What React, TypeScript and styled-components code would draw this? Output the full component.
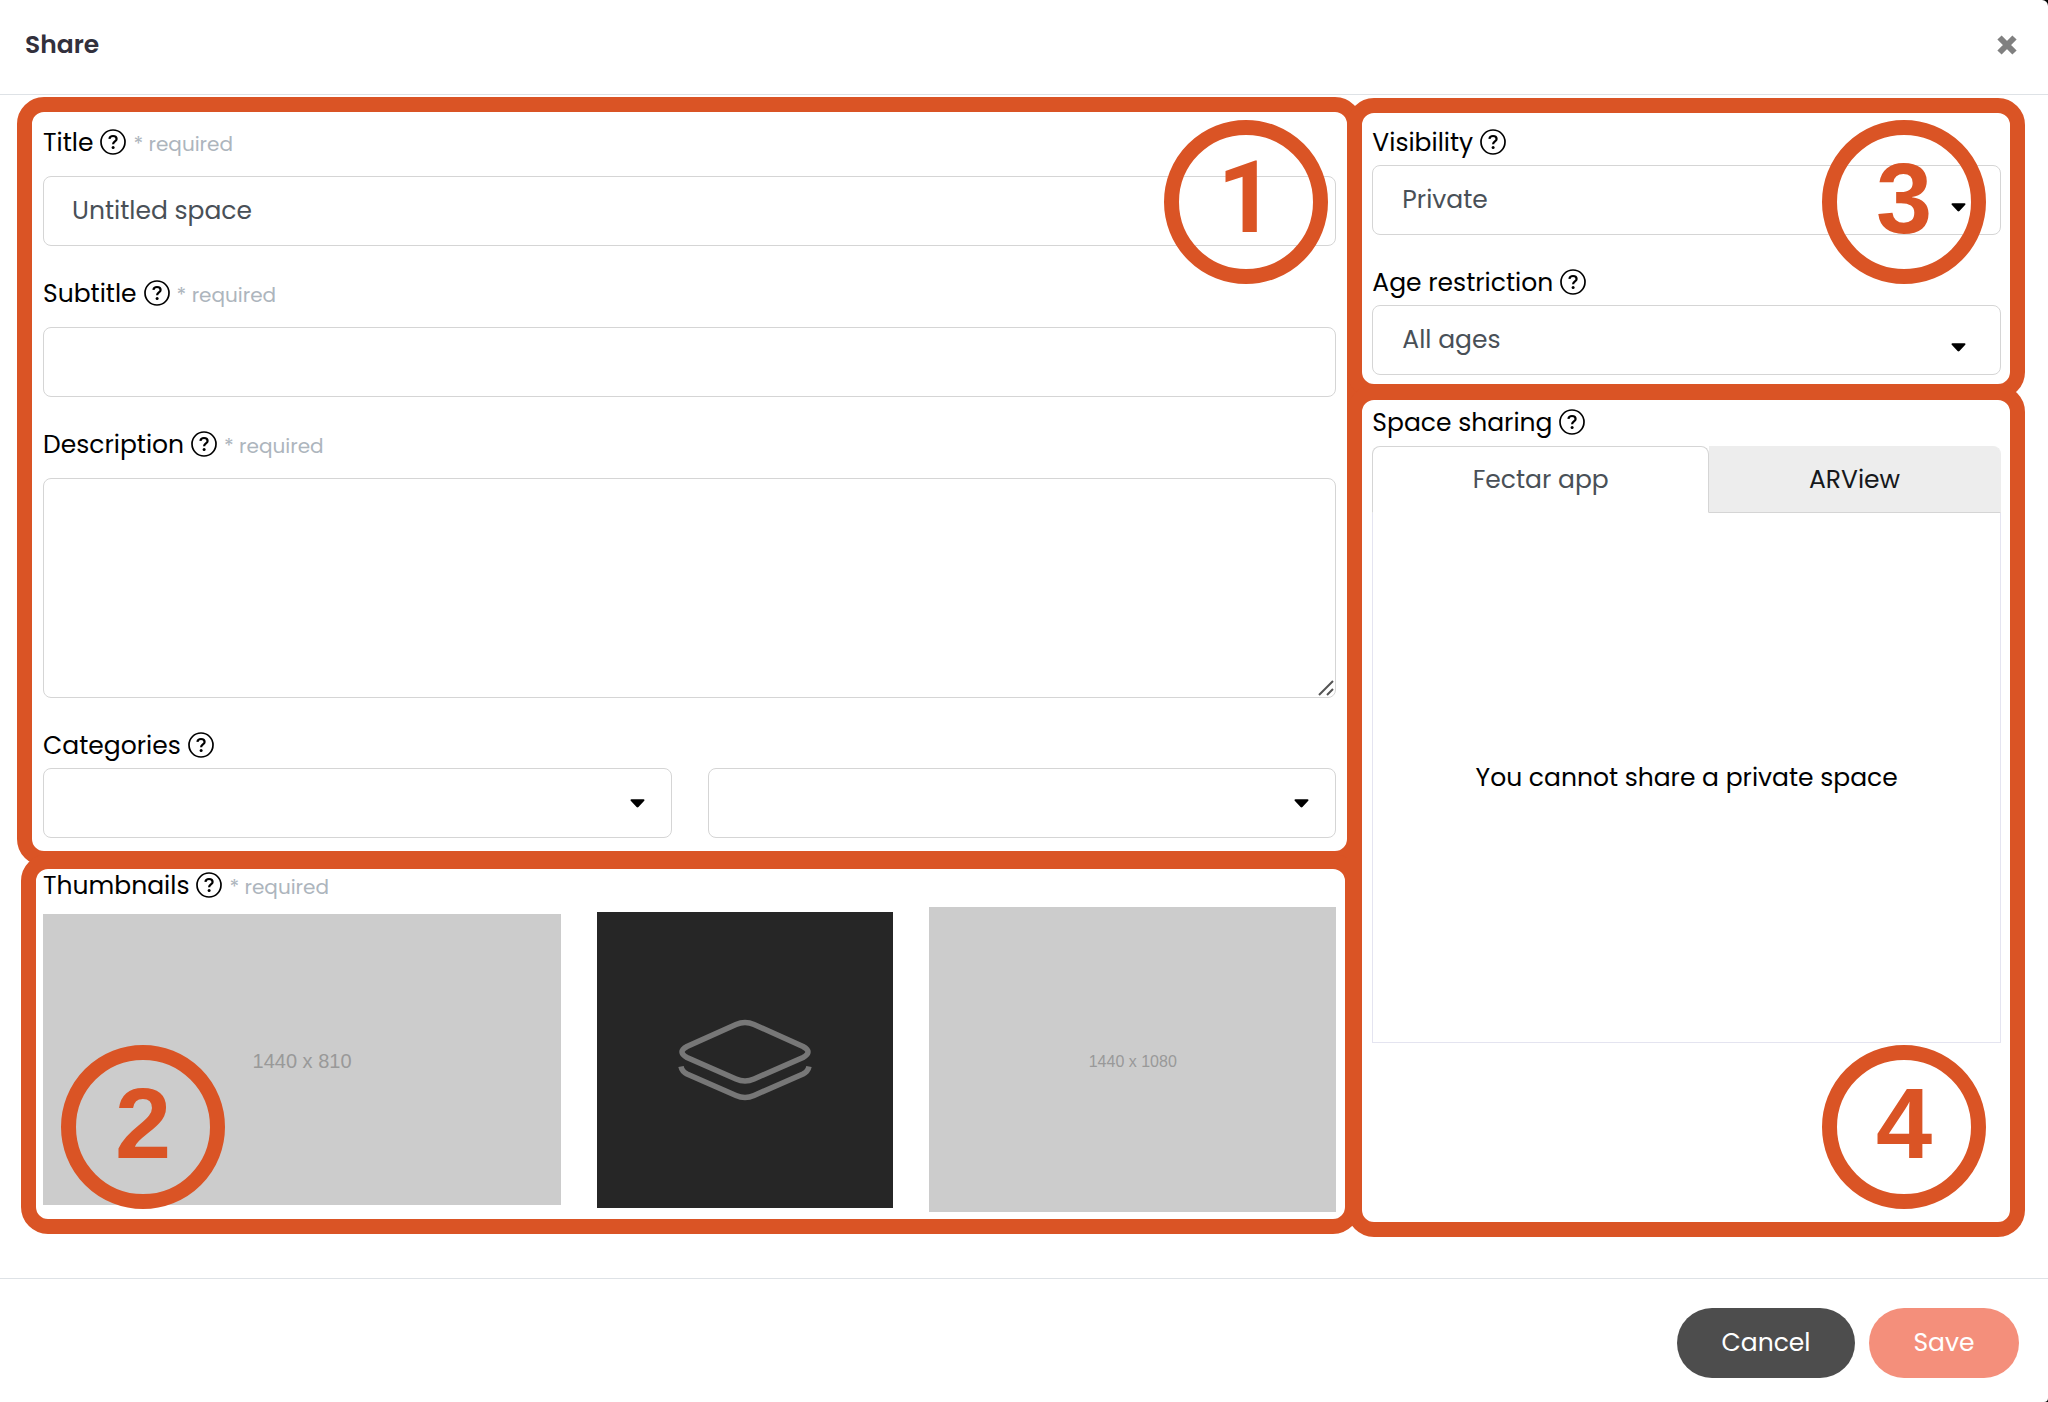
import React from "react";
import styled, { createGlobalStyle } from "styled-components";

const accent = "#da5425";
const uiFont = `Poppins, Inter, "Open Sans", sans-serif`;

const GlobalStyle = createGlobalStyle`
  *, *::before, *::after { box-sizing: border-box; }
  body { margin: 0; background: #000; font-family: ${uiFont}; font-size: 25px; color: #000; }
  button, input, select, textarea { font: inherit; }
`;

const Modal = styled.div`
  min-height: 100vh;
  display: flex;
  flex-direction: column;
  background: #fff;
  border-radius: 0 6px 4px 0;
`;

const Header = styled.header`
  display: flex;
  align-items: center;
  justify-content: space-between;
  height: 95px;
  padding: 0 28px 4px 25px;
  border-bottom: 1px solid #dee2e6;
`;

const Heading = styled.h1`
  margin: 0;
  font-size: 25px;
  line-height: 38px;
  font-weight: 600;
  color: #32303c;
`;

const CloseButton = styled.button`
  display: flex;
  padding: 2px;
  border: 0;
  background: none;
  color: #808080;
  cursor: pointer;
`;

const Body = styled.main`
  flex: 1;
  display: grid;
  grid-template-columns: minmax(0, 2fr) minmax(0, 1fr);
  align-items: start;
  padding: 28px 29px 48px 25px;
`;

const Column = styled.div`
  display: flex;
  flex-direction: column;
  gap: 28px;
  padding: 0 18px;
`;

const Section = styled.section`
  position: relative;
  display: flex;
  flex-direction: column;
  gap: 28px;
`;

const Highlight = styled.div<{ $inset: string }>`
  position: absolute;
  inset: ${(p) => p.$inset};
  border: 15px solid ${accent};
  border-radius: 27px;
  pointer-events: none;
`;

const Badge = styled.div<{ $inset: string; $face?: string }>`
  position: absolute;
  inset: ${(p) => p.$inset};
  width: 164px;
  height: 164px;
  border: 15px solid ${accent};
  border-radius: 50%;
  font-family: ${(p) => p.$face ?? `"Liberation Sans"`}, Arial, sans-serif;
  font-size: 101px;
  font-weight: 700;
  line-height: 126px;
  text-align: center;
  color: ${accent};
  pointer-events: none;
`;

const Field = styled.div<{ $gap?: number }>`
  display: flex;
  flex-direction: column;
  gap: ${(p) => p.$gap ?? 3}px;
`;

const LabelRow = styled.div`
  display: flex;
  align-items: baseline;
  gap: 7px;
  height: 39px;
  line-height: 39px;
`;

const Required = styled.span`
  font-size: 20px;
  color: #adb5bd;
`;

const HelpIcon = styled.svg`
  align-self: flex-start;
  margin-top: 6px;
`;

const control = `
  width: 100%;
  border: 1px solid #d5d5d5;
  border-radius: 8px;
  background: #fff;
  color: #495057;
  outline: none;
`;

const TextInput = styled.input`
  ${control}
  height: 70px;
  padding: 0 28px;
`;

const TextArea = styled.textarea`
  ${control}
  display: block;
  height: 220px;
  padding: 16px 28px;
  resize: none;
`;

const Overlay = styled.div`
  display: grid;
  > * { grid-area: 1 / 1; }
`;

const Select = styled.select`
  ${control}
  height: 70px;
  padding: 0 64px 2px 29px;
  appearance: none;
`;

const CaretIcon = styled.svg<{ $low?: boolean }>`
  align-self: center;
  justify-self: end;
  margin: ${(p) => (p.$low ? "15px 35px 0 0" : "0 27px 0 0")};
  pointer-events: none;
`;

const GripIcon = styled.svg`
  align-self: end;
  justify-self: end;
  margin: 0 2px 2px 0;
  pointer-events: none;
`;

const Pair = styled.div`
  display: grid;
  grid-template-columns: 1fr 1fr;
  gap: 36px;
`;

const Thumbs = styled.div`
  display: grid;
  grid-template-columns: 518fr 296fr 407fr;
  gap: 36px;
  align-items: center;
`;

const Thumb = styled.div<{ $ratio: string; $size?: number; $dark?: boolean }>`
  display: flex;
  align-items: center;
  justify-content: center;
  aspect-ratio: ${(p) => p.$ratio};
  padding-top: ${(p) => (p.$dark ? 0 : 4)}px;
  background: ${(p) => (p.$dark ? "#262626" : "#ccc")};
  color: #999;
  font-family: "Liberation Sans", Arial, sans-serif;
  font-size: ${(p) => p.$size ?? 20}px;
`;

const Tabs = styled.div`
  display: grid;
  grid-template-columns: 337fr 292fr;
`;

const Tab = styled.button<{ $active?: boolean }>`
  height: 67px;
  padding: 0;
  border: 1px solid ${(p) => (p.$active ? "#d5d5d5" : "#ededed")};
  border-bottom-color: ${(p) => (p.$active ? "#fff" : "#d5d5d5")};
  border-radius: 8px 8px 0 0;
  border-top-left-radius: ${(p) => (p.$active ? 8 : 0)}px;
  border-left-width: ${(p) => (p.$active ? 1 : 0)}px;
  background: ${(p) => (p.$active ? "#fff" : "#ededed")};
  color: ${(p) => (p.$active ? "#495057" : "#16181b")};
  cursor: pointer;
`;

const TabPanel = styled.div`
  display: flex;
  align-items: center;
  justify-content: center;
  height: 530px;
  border: 1px solid #e4e4f0;
  border-top: 0;
`;

const Footer = styled.footer`
  display: flex;
  justify-content: flex-end;
  gap: 14px;
  padding: 29px 29px 24px;
  border-top: 1px solid #dee2e6;
`;

const PillButton = styled.button<{ $tone: string; $width: number }>`
  width: ${(p) => p.$width}px;
  height: 70px;
  padding: 0;
  border: 0;
  border-radius: 35px;
  background: ${(p) => p.$tone};
  color: #fff;
`;

const Help = () => (
  <HelpIcon width="26" height="26" viewBox="0 0 26 26" fill="none" stroke="#000" aria-hidden="true">
    <circle cx="13" cy="13" r="12" strokeWidth="1.7" />
    <path d="M9.4 9.8C9.7 7.9 11.2 7 13 7c2 0 3.6 1 3.6 2.900 0 2.600-3.500 2.500-3.500 5.400" strokeWidth="2.200" />
    <circle cx="13.1" cy="18.400" r="1.500" fill="#000" stroke="none" />
  </HelpIcon>
);

const Caret = ({ low }: { low?: boolean }) => (
  <CaretIcon $low={low} width="15" height="9" viewBox="0 0 16 9" aria-hidden="true">
    <path d="M1.5 0h13c.9 0 1.3 1 .7 1.600L9 8.300c-.6.6-1.400.6-2 0L.8 1.600C.2 1 .6 0 1.500 0z" />
  </CaretIcon>
);

const Label = ({ id, text, required }: { id?: string; text: string; required?: boolean }) => (
  <LabelRow>
    {id ? <label htmlFor={id}>{text}</label> : <span>{text}</span>}
    <Help />
    {required && <Required>* required</Required>}
  </LabelRow>
);

export default function App() {
  return (
    <>
      <GlobalStyle />
      <Modal>
        <Header>
          <Heading>Share</Heading>
          <CloseButton type="button" aria-label="Close">
            <svg width="22" height="22" viewBox="0 0 22 22" stroke="currentColor" strokeWidth="6" aria-hidden="true">
              <path d="M3.500 3.500l15 15M18.500 3.500l-15 15" />
            </svg>
          </CloseButton>
        </Header>
        <Body>
          <Column>
            <Section>
              <Field $gap={14}>
                <Label id="title" text="Title" required />
                <TextInput id="title" defaultValue="Untitled space" />
              </Field>
              <Field $gap={14}>
                <Label id="subtitle" text="Subtitle" required />
                <TextInput id="subtitle" />
              </Field>
              <Field $gap={14}>
                <Label id="description" text="Description" required />
                <Overlay>
                  <TextArea id="description" />
                  <GripIcon width="16" height="16" viewBox="0 0 16 16" stroke="#555" strokeWidth="2" aria-hidden="true">
                    <path d="M1 15L15 1M9 15l6-6" />
                  </GripIcon>
                </Overlay>
              </Field>
              <Field>
                <Label id="category" text="Categories" />
                <Pair>
                  <Overlay>
                    <Select id="category"><option></option></Select>
                    <Caret />
                  </Overlay>
                  <Overlay>
                    <Select aria-label="Second category"><option></option></Select>
                    <Caret />
                  </Overlay>
                </Pair>
              </Field>
              <Highlight $inset="-26px -26px -28px -26px" />
              <Badge $inset="-3px 8px auto auto" $face="Roboto">1</Badge>
            </Section>
            <Section>
              <Field $gap={2}>
                <Label text="Thumbnails" required />
                <Thumbs>
                  <Thumb $ratio="16 / 9">1440 x 810</Thumb>
                  <Thumb $ratio="1" $dark>
                    <svg width="134" height="82" viewBox="0 0 134 82" fill="none" stroke="#777" strokeWidth="5.500" aria-hidden="true">
                      <path d="M58 5.500q9-4 18 0l49 22q10 5.500 0 11L76 60q-9 4-18 0L9 38.500q-10-5.500 0-11z" />
                      <path d="M3 47.500q1 5 6 7.500l49 21.500q9 4 18 0L125 55q5-2.500 6-7.500" />
                    </svg>
                  </Thumb>
                  <Thumb $ratio="4 / 3" $size={16}>1440 x 1080</Thumb>
                </Thumbs>
              </Field>
              <Highlight $inset="-12px -24px -22px -22px" />
              <Badge $inset="auto auto 3px 18px">2</Badge>
            </Section>
          </Column>
          <Column>
            <Section>
              <Field>
                <Label id="visibility" text="Visibility" />
                <Overlay>
                  <Select id="visibility"><option>Private</option></Select>
                  <Caret low />
                </Overlay>
              </Field>
              <Field>
                <Label id="age" text="Age restriction" />
                <Overlay>
                  <Select id="age"><option>All ages</option></Select>
                  <Caret low />
                </Overlay>
              </Field>
              <Highlight $inset="-25px -24px -24px -25px" />
              <Badge $inset="-3px 15px auto auto">3</Badge>
            </Section>
            <Section>
              <Field $gap={4}>
                <Label text="Space sharing" />
                <div>
                  <Tabs role="tablist">
                    <Tab type="button" role="tab" aria-selected="true" $active>Fectar app</Tab>
                    <Tab type="button" role="tab" aria-selected="false">ARView</Tab>
                  </Tabs>
                  <TabPanel role="tabpanel">You cannot share a private space</TabPanel>
                </div>
              </Field>
              <Highlight $inset="-18px -24px -194px -25px" />
              <Badge $inset="auto 15px -166px auto">4</Badge>
            </Section>
          </Column>
        </Body>
        <Footer>
          <PillButton type="button" $tone="#4d4d4d" $width={178}>Cancel</PillButton>
          <PillButton type="button" $tone="#f48f7b" $width={150}>Save</PillButton>
        </Footer>
      </Modal>
    </>
  );
}
